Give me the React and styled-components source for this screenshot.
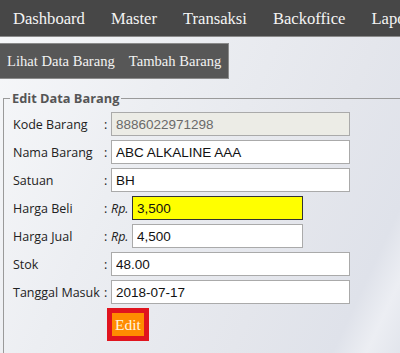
import React from "react";
import styled, { createGlobalStyle } from "styled-components";

const GlobalStyle = createGlobalStyle`
  html, body {
    margin: 0;
    padding: 0;
  }
  body {
    width: 400px;
    height: 353px;
    overflow: hidden;
    background: linear-gradient(115deg, #f7f8fa 0%, #eceef2 35%, #e4e6ec 70%, #dfe2ea 88%, #eceef3 94%, #e2e5ec 100%);
    font-family: "Liberation Serif", serif;
  }
`;

const NavBar = styled.nav`
  display: flex;
  height: 36px;
  background: #474747;
  border-bottom: 1px solid #8a8a8a;
  white-space: nowrap;
`;

const NavItem = styled.a`
  display: flex;
  align-items: center;
  padding: 2px 13px 0 13px;
  color: #f4f4f4;
  font-family: "Liberation Serif", serif;
  font-size: 16.6px;
  text-decoration: none;
`;

const SubMenu = styled.div`
  display: inline-flex;
  margin-top: 6px;
  height: 34px;
  background: #575757;
  border: 1px solid #8a8a8a;
  border-left: none;
`;

const SubItem = styled.a`
  display: flex;
  align-items: center;
  padding: 0 7px 0 7px;
  color: #f2f2f2;
  font-family: "Liberation Serif", serif;
  font-size: 14.6px;
  text-decoration: none;
`;

const Fieldset = styled.fieldset`
  margin: 10px 0 0 3px;
  width: 440px;
  padding: 5px 9px 8px 9px;
  border: 1px solid #9a9a9a;
  border-right: none;
  box-sizing: border-box;
  height: 265px;
`;

const Legend = styled.legend`
  padding: 0 2px;
  margin-left: -3px;
  color: #555;
  font-family: "Open Sans", sans-serif;
  font-weight: 700;
  font-size: 12.8px;
  line-height: 18px;
`;

const Row = styled.div`
  display: flex;
  align-items: center;
  height: 24px;
  margin-bottom: 4px;
`;

const Label = styled.span`
  width: 91px;
  color: #222;
  font-family: "Open Sans", sans-serif;
  font-size: 12.5px;
`;

const Colon = styled.span`
  width: 7px;
  color: #222;
  font-family: "Open Sans", sans-serif;
  font-size: 12.5px;
`;

const Rp = styled.span`
  width: 21px;
  color: #222;
  font-family: "Open Sans", sans-serif;
  font-style: italic;
  font-size: 12.5px;
`;

const Input = styled.input`
  box-sizing: border-box;
  width: ${(p) => p.$w || 239}px;
  height: 24px;
  padding: 0 4px;
  border: 1px solid ${(p) => (p.$hl ? "#333" : "#aaa")};
  background: ${(p) => (p.$hl ? "#ffff00" : p.disabled ? "#ecece6" : "#fff")};
  color: ${(p) => (p.disabled ? "#6a6a6a" : "#111")};
  font-family: "Liberation Sans", Arial, sans-serif;
  font-size: 13.5px;
  outline: none;
`;

const Actions = styled.div`
  padding-left: 94px;
`;

const EditButton = styled.button`
  box-sizing: border-box;
  width: 42px;
  height: 33px;
  border: 5px solid #e0141e;
  background: #ff8c00;
  color: #fff6e0;
  font-family: "Liberation Serif", serif;
  font-size: 15.5px;
  padding: 0;
`;

const fields = [
  { label: "Kode Barang", value: "8886022971298", disabled: true },
  { label: "Nama Barang", value: "ABC ALKALINE AAA" },
  { label: "Satuan", value: "BH" },
  { label: "Harga Beli", value: "3,500", rp: true, hl: true },
  { label: "Harga Jual", value: "4,500", rp: true },
  { label: "Stok", value: "48.00" },
  { label: "Tanggal Masuk", value: "2018-07-17" },
];

export default function App() {
  return (
    <>
      <GlobalStyle />
      <NavBar>
        {["Dashboard", "Master", "Transaksi", "Backoffice", "Laporan"].map((n) => (
          <NavItem key={n}>{n}</NavItem>
        ))}
      </NavBar>
      <SubMenu>
        <SubItem>Lihat Data Barang</SubItem>
        <SubItem>Tambah Barang</SubItem>
      </SubMenu>
      <Fieldset>
        <Legend>Edit Data Barang</Legend>
        {fields.map((f) => (
          <Row key={f.label}>
            <Label>{f.label}</Label>
            <Colon>:</Colon>
            {f.rp && <Rp>Rp.</Rp>}
            <Input
              readOnly
              value={f.value}
              disabled={f.disabled}
              $hl={f.hl}
              $w={f.rp ? 171 : 239}
            />
          </Row>
        ))}
        <Actions>
          <EditButton>Edit</EditButton>
        </Actions>
      </Fieldset>
    </>
  );
}
